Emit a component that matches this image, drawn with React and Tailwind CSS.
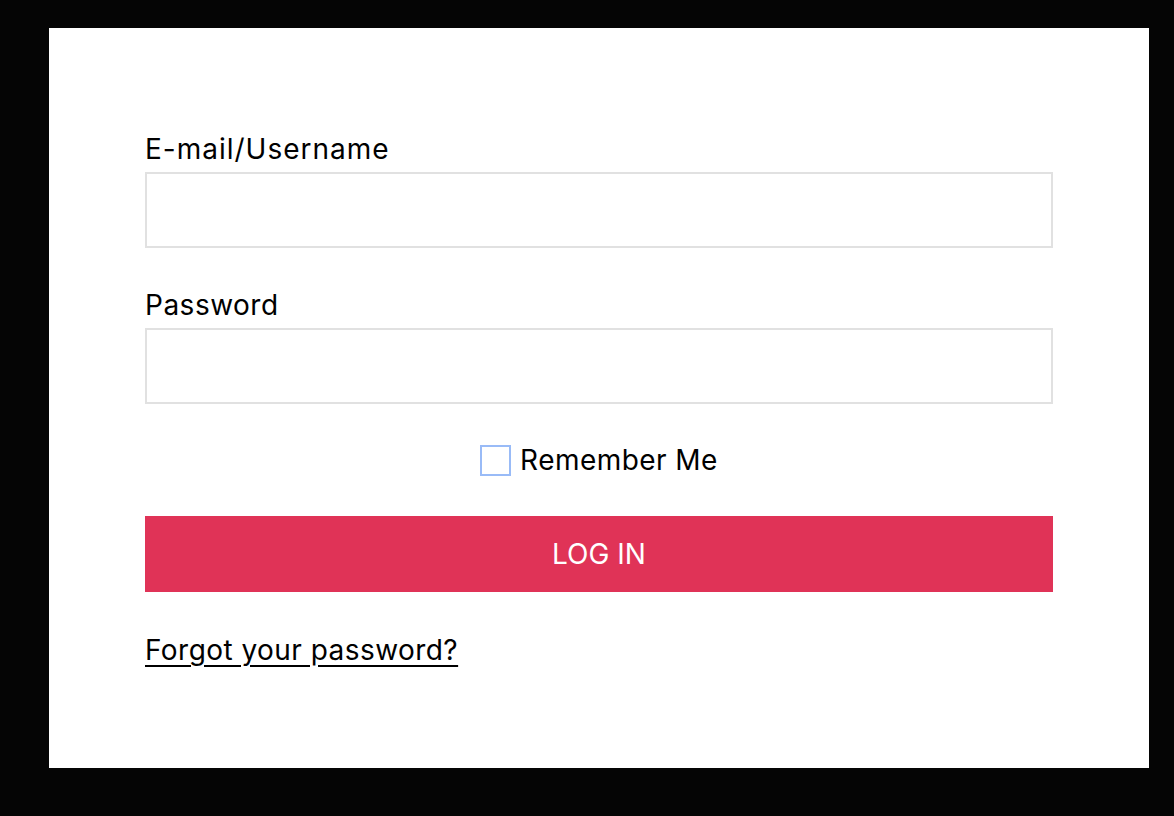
export default function App() {
  return (
    <div className="min-h-[816px] w-full bg-[#050505] pt-[28px] pl-[49px]" style={{ fontFamily: "Inter, Roboto, 'Liberation Sans', sans-serif" }}>
      <div className="w-[1100px] h-[740px] bg-white px-[96px] pt-[103px]">
        <label className="block text-[28px] leading-[36px] tracking-[1px] text-black mb-[5px]">E-mail/Username</label>
        <input className="block w-full h-[76px] border-2 border-[#e1e1e1] outline-none" />
        <label className="block text-[28px] leading-[36px] tracking-[0.5px] text-black mt-[39px] mb-[5px]">Password</label>
        <input type="password" className="block w-full h-[76px] border-2 border-[#e1e1e1] outline-none" />
        <div className="mt-[38px] h-[36px] flex items-center justify-center gap-[9px]">
          <span className="w-[31px] h-[31px] border-2 border-[#99bbf7] bg-white"></span>
          <span className="text-[28px] leading-[36px] tracking-[0.45px] text-black">Remember Me</span>
        </div>
        <button className="mt-[38px] w-full h-[76px] bg-[#e03357] text-white text-[28px] leading-[36px]">LOG IN</button>
        <div className="mt-[40px]">
          <a href="#" className="text-[28px] leading-[36px] tracking-[0.45px] text-black underline underline-offset-[5px]">Forgot your password?</a>
        </div>
      </div>
    </div>
  );
}
